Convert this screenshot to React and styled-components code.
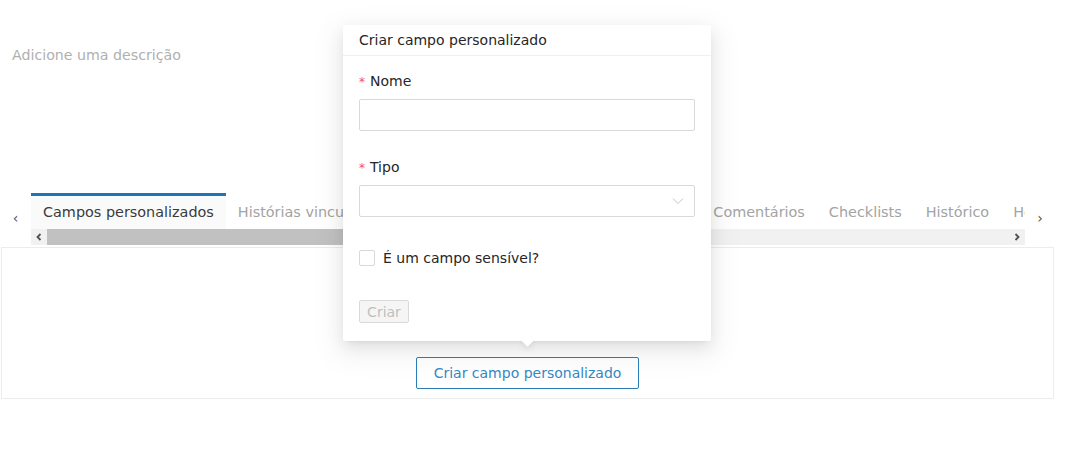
import React from 'react'
import styled, {createGlobalStyle} from 'styled-components'

const GlobalStyle = createGlobalStyle`
  body {
    margin: 0;
    background: #fff;
    font-family: "DejaVu Sans", "Noto Sans", sans-serif;
    color: #262626;
  }
  * { box-sizing: border-box; }
`

const Page = styled.div`
  position: relative;
  width: 1055px;
  height: 451px;
`

const Description = styled.div`
  height: 193px;
  padding: 44px 12px 0;
  font-size: 14.2px;
  line-height: 22px;
  color: #b0b0b0;
`

const TabsNav = styled.div`
  display: flex;
  height: 52px;
`

const NavArrow = styled.div`
  width: ${p => p.$w}px;
  flex-shrink: 0;
  display: flex;
  justify-content: center;
  padding-top: 17px;
  color: #555;
  font-size: 14px;
`

const Strip = styled.div`
  width: 994px;
  display: flex;
  flex-direction: column;
  overflow: hidden;
`

const TabList = styled.div`
  display: flex;
  height: 36px;
  overflow: hidden;
`

const Tab = styled.div`
  flex-shrink: 0;
  padding: 0 12px;
  border-top: 3px solid ${p => (p.$active ? '#1b75bb' : 'transparent')};
  background: ${p => (p.$active ? '#fafafa' : 'transparent')};
  color: ${p => (p.$active ? '#3a3a3a' : '#a3a3a3')};
  font-size: 14.4px;
  line-height: 33px;
  white-space: nowrap;
`

const Scrollbar = styled.div`
  display: flex;
  height: 16px;
  background: #f1f1f1;
`

const ScrollButton = styled.div`
  width: 16px;
  display: flex;
  align-items: center;
  justify-content: center;
`

const Thumb = styled.div`
  width: 620px;
  background: #c1c1c1;
`

const Track = styled.div`
  flex: 1;
`

const Panel = styled.div`
  margin: 2px 0 0 1px;
  width: 1053px;
  height: 152px;
  border: 1px solid #ececec;
  display: flex;
  align-items: flex-end;
  justify-content: center;
  padding-bottom: 9px;
`

const OutlineButton = styled.button`
  height: 32px;
  padding: 0 17px;
  border: 1px solid #2b7fb9;
  border-radius: 2px;
  background: #fff;
  color: #3589c3;
  font-family: inherit;
  font-size: 14px;
  cursor: pointer;
`

const Popover = styled.div`
  position: absolute;
  left: 343px;
  top: 25px;
  width: 368px;
  background: #fff;
  border-radius: 2px;
  box-shadow: 0 3px 6px -4px rgba(0, 0, 0, 0.12), 0 6px 16px 0 rgba(0, 0, 0, 0.08), 0 9px 28px 8px rgba(0, 0, 0, 0.05);

  &::after {
    content: '';
    position: absolute;
    left: 180px;
    bottom: -4px;
    width: 9px;
    height: 9px;
    background: #fff;
    transform: rotate(45deg);
    box-shadow: 3px 3px 7px rgba(0, 0, 0, 0.07);
  }
`

const PopoverHeader = styled.div`
  height: 31px;
  padding: 4px 16px 0;
  border-bottom: 1px solid #f0f0f0;
  font-size: 14px;
  line-height: 22px;
  color: #262626;
`

const PopoverBody = styled.div`
  padding: 14px 16px 18px;
  display: flex;
  flex-direction: column;
`

const FormItem = styled.div`
  display: flex;
  flex-direction: column;
  gap: 6px;
  margin-bottom: ${p => p.$mb}px;
`

const Label = styled.label`
  font-size: 14px;
  line-height: 22px;
  color: #262626;

  &::before {
    content: '*';
    color: #ff4d4f;
    font-size: 12px;
    margin: 0 5px 0 0;
  }
`

const Input = styled.input`
  height: 32px;
  width: 100%;
  border: 1px solid #d9d9d9;
  border-radius: 2px;
  padding: 4px 11px;
  font-family: inherit;
  font-size: 14px;
  outline: none;
`

const Select = styled.div`
  height: 32px;
  border: 1px solid #d9d9d9;
  border-radius: 2px;
  display: flex;
  align-items: center;
  justify-content: flex-end;
  padding-right: 10px;
`

const CheckRow = styled.label`
  display: flex;
  align-items: center;
  gap: 8px;
  font-size: 14px;
  line-height: 22px;
  color: #262626;
  margin-bottom: 31px;
`

const Box = styled.span`
  width: 16px;
  height: 16px;
  border: 1px solid #d9d9d9;
  border-radius: 2px;
  background: #fff;
`

const DisabledButton = styled.button`
  align-self: flex-start;
  height: 23px;
  width: 50px;
  padding: 0;
  border: 1px solid #d9d9d9;
  border-radius: 2px;
  background: #f5f5f5;
  color: #bfbfbf;
  font-family: inherit;
  font-size: 14px;
`

const tabs = [
  'Campos personalizados',
  'Histórias vinculadas',
  'Anexos',
  'Subtarefas',
  'Apontamentos',
  'Comentários',
  'Checklists',
  'Histórico',
  'Horas',
]

const Chevron = ({dir}) => (
  <svg width="8" height="8" viewBox="0 0 8 8">
    <path
      d={dir === 'left' ? 'M5.5 1 L2.5 4 L5.5 7' : 'M2.5 1 L5.5 4 L2.5 7'}
      fill="none"
      stroke="#505050"
      strokeWidth="1.8"
    />
  </svg>
)

const App = () => {
  return (
    <Page>
      <GlobalStyle />
      <Description>Adicione uma descrição</Description>

      <TabsNav>
        <NavArrow $w={31}>‹</NavArrow>
        <Strip>
          <TabList>
            {tabs.map((t, i) => (
              <Tab key={t} $active={i === 0}>{t}</Tab>
            ))}
          </TabList>
          <Scrollbar>
            <ScrollButton><Chevron dir="left" /></ScrollButton>
            <Thumb />
            <Track />
            <ScrollButton><Chevron dir="right" /></ScrollButton>
          </Scrollbar>
        </Strip>
        <NavArrow $w={30}>›</NavArrow>
      </TabsNav>

      <Panel>
        <OutlineButton>Criar campo personalizado</OutlineButton>
      </Panel>

      <Popover>
        <PopoverHeader>Criar campo personalizado</PopoverHeader>
        <PopoverBody>
          <FormItem $mb={25}>
            <Label>Nome</Label>
            <Input />
          </FormItem>
          <FormItem $mb={30}>
            <Label>Tipo</Label>
            <Select>
              <svg width="12" height="8" viewBox="0 0 12 8">
                <path d="M1 1.5 L6 6.5 L11 1.5" fill="none" stroke="#c4c4c4" strokeWidth="1" />
              </svg>
            </Select>
          </FormItem>
          <CheckRow>
            <Box />
            É um campo sensível?
          </CheckRow>
          <DisabledButton disabled>Criar</DisabledButton>
        </PopoverBody>
      </Popover>
    </Page>
  )
}

export default App
